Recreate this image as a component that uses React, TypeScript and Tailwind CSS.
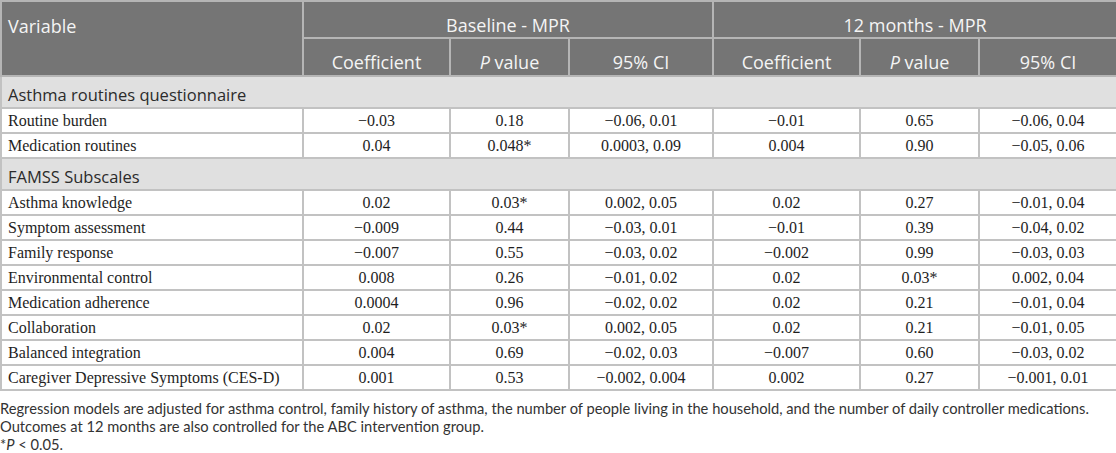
const sans = { fontFamily: '"Open Sans", "Liberation Sans", sans-serif' }

type Row = { label: string; v: string[] }

const routines: Row[] = [
  { label: 'Routine burden', v: ['−0.03', '0.18', '−0.06, 0.01', '−0.01', '0.65', '−0.06, 0.04'] },
  { label: 'Medication routines', v: ['0.04', '0.048*', '0.0003, 0.09', '0.004', '0.90', '−0.05, 0.06'] },
]

const famss: Row[] = [
  { label: 'Asthma knowledge', v: ['0.02', '0.03*', '0.002, 0.05', '0.02', '0.27', '−0.01, 0.04'] },
  { label: 'Symptom assessment', v: ['−0.009', '0.44', '−0.03, 0.01', '−0.01', '0.39', '−0.04, 0.02'] },
  { label: 'Family response', v: ['−0.007', '0.55', '−0.03, 0.02', '−0.002', '0.99', '−0.03, 0.03'] },
  { label: 'Environmental control', v: ['0.008', '0.26', '−0.01, 0.02', '0.02', '0.03*', '0.002, 0.04'] },
  { label: 'Medication adherence', v: ['0.0004', '0.96', '−0.02, 0.02', '0.02', '0.21', '−0.01, 0.04'] },
  { label: 'Collaboration', v: ['0.02', '0.03*', '0.002, 0.05', '0.02', '0.21', '−0.01, 0.05'] },
  { label: 'Balanced integration', v: ['0.004', '0.69', '−0.02, 0.03', '−0.007', '0.60', '−0.03, 0.02'] },
  { label: 'Caregiver Depressive Symptoms (CES-D)', v: ['0.001', '0.53', '−0.002, 0.004', '0.002', '0.27', '−0.001, 0.01'] },
]

const DataRow = ({ row }: { row: Row }) => (
  <tr className="h-[25px]">
    <td className="border-2 border-[#c2c2c2] px-[6px] text-left">{row.label}</td>
    {row.v.map((x, i) => (
      <td key={i} className="border-2 border-[#c2c2c2] px-2 text-center">
        {x}
      </td>
    ))}
  </tr>
)

const Section = ({ title }: { title: string }) => (
  <tr className="h-[32px] bg-[#e0e0e0]">
    <td colSpan={7} className="border-2 border-[#c2c2c2] px-[6px] pb-[4px] align-bottom text-[16.5px] text-[#2b2b2b]" style={sans}>
      {title}
    </td>
  </tr>
)

const PValue = () => (
  <>
    <span className="italic">P</span> value
  </>
)

export default function App() {
  return (
    <div className="w-[1116px] h-[453px] bg-white overflow-hidden">
      <table
        className="w-[1116px] table-fixed border-collapse text-[16px] leading-none text-[#1e1e1e]"
        style={{ fontFamily: '"Liberation Serif", "Times New Roman", serif' }}
      >
        <colgroup>
          <col className="w-[302px]" />
          <col className="w-[147px]" />
          <col className="w-[119px]" />
          <col className="w-[144px]" />
          <col className="w-[147px]" />
          <col className="w-[119px]" />
          <col className="w-[138px]" />
        </colgroup>
        <thead className="bg-[#757575] text-[18px] text-[#f4f4f4]" style={sans}>
          <tr className="h-[37px]">
            <th rowSpan={2} className="border-2 border-[#b5b5b5] px-[6px] pt-[15px] align-top text-left font-normal">
              Variable
            </th>
            <th colSpan={3} className="border-2 border-[#b5b5b5] pb-[3px] align-bottom font-normal">
              Baseline - MPR
            </th>
            <th colSpan={3} className="border-2 border-[#b5b5b5] pb-[3px] align-bottom font-normal">
              12 months - MPR
            </th>
          </tr>
          <tr className="h-[38px]">
            <th className="border-2 border-[#b5b5b5] pb-[4px] align-bottom font-normal">Coefficient</th>
            <th className="border-2 border-[#b5b5b5] pb-[4px] align-bottom font-normal"><PValue /></th>
            <th className="border-2 border-[#b5b5b5] pb-[4px] align-bottom font-normal">95% CI</th>
            <th className="border-2 border-[#b5b5b5] pb-[4px] align-bottom font-normal">Coefficient</th>
            <th className="border-2 border-[#b5b5b5] pb-[4px] align-bottom font-normal"><PValue /></th>
            <th className="border-2 border-[#b5b5b5] pb-[4px] align-bottom font-normal">95% CI</th>
          </tr>
        </thead>
        <tbody>
          <Section title="Asthma routines questionnaire" />
          {routines.map((r) => (
            <DataRow key={r.label} row={r} />
          ))}
          <Section title="FAMSS Subscales" />
          {famss.map((r) => (
            <DataRow key={r.label} row={r} />
          ))}
        </tbody>
      </table>
      <div
        className="mt-[8px] text-[14.7px] leading-[18px] text-[#333] whitespace-nowrap"
        style={{ fontFamily: 'Lato, "Open Sans", sans-serif' }}
      >
        <p>
          Regression models are adjusted for asthma control, family history of asthma, the number of people living in the household, and the number of daily controller medications.
        </p>
        <p>Outcomes at 12 months are also controlled for the ABC intervention group.</p>
        <p>
          *<span className="italic">P</span> &lt; 0.05.
        </p>
      </div>
    </div>
  )
}
